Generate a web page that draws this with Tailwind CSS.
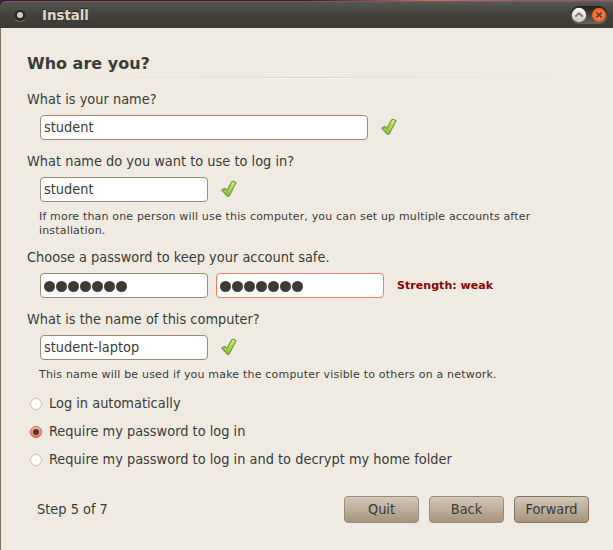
<!DOCTYPE html>
<html lang="en">
<head>
<meta charset="utf-8">
<title>Install</title>
<script src="https://cdn.jsdelivr.net/npm/@tailwindcss/browser@4"></script>
</head>
<body class="h-[550px] w-[613px] overflow-hidden bg-linear-to-r from-[#43173b] from-50% via-[#e5625f] via-70% to-[#97527f] to-85% font-['DejaVu_Sans_Condensed','DejaVu_Sans',sans-serif] text-[14.4px] leading-[20px] tracking-[0.01px] text-[#3c3b37] [font-stretch:condensed]">
<svg width="0" height="0" class="absolute" aria-hidden="true">
  <defs>
    <linearGradient id="green" x1="0" y1="0" x2="0" y2="1"><stop offset="0" stop-color="#e0ec7c"/><stop offset="1" stop-color="#8fbd2c"/></linearGradient>
    <symbol id="check" viewBox="0 0 18 18">
      <path d="M1.800 10 4.800 8.300 6.800 10.600 11.800 1.800 13.400 1.300 16 2.700 9.400 15.600 7.600 16.400Z" fill="url(#green)" stroke="#6f9b45" stroke-width="1.200" stroke-linejoin="round"/>
    </symbol>
  </defs>
</svg>
<div class="flex h-full flex-col pt-px">
  <header class="flex h-[27px] shrink-0 items-center rounded-tl-[6px] border-t border-[#65635c] bg-linear-to-b from-[#575650] via-[#403f3a] via-55% to-[#3b3a36] pr-[4px] pl-[14px]">
    <span class="mt-px flex size-[12px] items-center justify-center rounded-full border-b border-[#77756d] bg-[#2b2a27]"><span class="size-[6px] rounded-full bg-[#d3cec4]"></span></span>
    <h1 class="mt-[2px] ml-[16px] font-['DejaVu_Sans'] text-[13.33px] font-bold tracking-normal text-[#dfd8c8] [font-stretch:normal] [text-shadow:0_-1px_#252522]">Install</h1>
    <svg class="ml-auto" width="40" height="20" viewBox="0 0 40 20">
      <defs>
        <linearGradient id="well" x1="0" y1="0" x2="0" y2="1"><stop stop-color="#22211f"/><stop offset="1" stop-color="#65645e"/></linearGradient>
        <linearGradient id="white" x1="0" y1="0" x2="0" y2="1"><stop stop-color="#fff"/><stop offset="1" stop-color="#cfc9bd"/></linearGradient>
        <radialGradient id="orange"><stop stop-color="#ff9364"/><stop offset=".65" stop-color="#fa753f"/><stop offset="1" stop-color="#e84c18"/></radialGradient>
      </defs>
      <rect x="1" y="1" width="38" height="18" rx="9" fill="url(#well)"/>
      <circle cx="10" cy="10" r="7.200" fill="url(#white)"/>
      <path d="M6.300 11.500 10 8.200l3.700 3.300" fill="none" stroke="#75736e" stroke-width="1.800"/>
      <circle cx="30" cy="10" r="7.200" fill="url(#orange)"/>
      <path d="m27.300 7.500 5.400 5m0-5-5.400 5" stroke="#69402d" stroke-width="1.800"/>
    </svg>
  </header>
  <main class="flex grow flex-col border-l border-[#857460] bg-[#efebe3] pl-[26px]">
    <h2 class="mt-[26px] h-[23px] font-['DejaVu_Sans'] text-[16px] font-bold tracking-normal [font-stretch:normal]">Who are you?</h2>
    <div class="h-px w-[562px] bg-linear-to-r from-[#efebe3] via-[#ddd8c9] to-[#efebe3]"></div>
    <div class="h-px w-[562px] bg-linear-to-r from-[#efebe3] via-[#f6f3e9] to-[#efebe3]"></div>
    <label class="mt-[10px]">What is your name?</label>
    <div class="mt-[6px] ml-[13px] flex items-center">
      <div class="h-[25px] w-[328px] rounded-[4px] border border-[#9c8b72] bg-white pl-[3px] leading-[23px]">student</div>
      <svg class="mb-[2px] ml-[12px]" width="18" height="18"><use href="#check"/></svg>
    </div>
    <label class="mt-[11px]">What name do you want to use to log in?</label>
    <div class="mt-[6px] ml-[13px] flex items-center">
      <div class="h-[25px] w-[168px] rounded-[4px] border border-[#9c8b72] bg-white pl-[3px] leading-[23px]">student</div>
      <svg class="mb-[2px] ml-[12px]" width="18" height="18"><use href="#check"/></svg>
    </div>
    <p class="mt-[8px] ml-[12px] w-[510px] font-['DejaVu_Sans'] text-[11px] leading-[14px] tracking-[0.17px] [font-stretch:normal]">If more than one person will use this computer, you can set up multiple accounts after<br>installation.</p>
    <label class="mt-[9px]">Choose a password to keep your account safe.</label>
    <div class="mt-[6px] ml-[13px] flex items-center">
      <div class="flex h-[25px] w-[168px] items-center gap-px rounded-[4px] border border-[#9c8b72] bg-white pt-px pl-[3px]">
        <i class="size-[11px] rounded-full bg-[#3c3b37]"></i><i class="size-[11px] rounded-full bg-[#3c3b37]"></i><i class="size-[11px] rounded-full bg-[#3c3b37]"></i><i class="size-[11px] rounded-full bg-[#3c3b37]"></i><i class="size-[11px] rounded-full bg-[#3c3b37]"></i><i class="size-[11px] rounded-full bg-[#3c3b37]"></i><i class="size-[11px] rounded-full bg-[#3c3b37]"></i>
      </div>
      <div class="ml-[8px] flex h-[25px] w-[168px] items-center gap-px rounded-[4px] border border-[#f47a62] bg-white pt-px pl-[3px]">
        <i class="size-[11px] rounded-full bg-[#3c3b37]"></i><i class="size-[11px] rounded-full bg-[#3c3b37]"></i><i class="size-[11px] rounded-full bg-[#3c3b37]"></i><i class="size-[11px] rounded-full bg-[#3c3b37]"></i><i class="size-[11px] rounded-full bg-[#3c3b37]"></i><i class="size-[11px] rounded-full bg-[#3c3b37]"></i><i class="size-[11px] rounded-full bg-[#3c3b37]"></i>
      </div>
      <strong class="ml-[13px] font-['DejaVu_Sans'] text-[11px] tracking-[0.05px] text-[#8b0000] [font-stretch:normal]">Strength: weak</strong>
    </div>
    <label class="mt-[11px]">What is the name of this computer?</label>
    <div class="mt-[6px] ml-[13px] flex items-center">
      <div class="h-[25px] w-[168px] rounded-[4px] border border-[#9c8b72] bg-white pl-[3px] leading-[23px]">student-laptop</div>
      <svg class="mb-[2px] ml-[12px]" width="18" height="18"><use href="#check"/></svg>
    </div>
    <p class="mt-[8px] ml-[12px] font-['DejaVu_Sans'] text-[11px] leading-[14px] tracking-[0.19px] [font-stretch:normal]">This name will be used if you make the computer visible to others on a network.</p>
    <div class="mt-[11px] ml-[3px] flex flex-col gap-[8px]">
      <div class="flex items-center gap-[7px]"><span class="mt-px size-[12px] rounded-full border border-[#cabfb0] bg-white"></span>Log in automatically</div>
      <div class="flex items-center gap-[7px]"><span class="mt-px flex size-[12px] items-center justify-center rounded-full border border-[#e6543d] bg-linear-to-b from-[#ffc0ae] to-[#f9694e]"><span class="size-[6px] rounded-full bg-[#3c3b37]"></span></span>Require my password to log in</div>
      <div class="flex items-center gap-[7px]"><span class="mt-px size-[12px] rounded-full border border-[#cabfb0] bg-white"></span>Require my password to log in and to decrypt my home folder</div>
    </div>
    <footer class="mt-[27px] flex items-center pr-[24px] pl-[10px]">
      <span class="-mt-[2px]">Step 5 of 7</span>
      <div class="ml-auto flex gap-[10px]">
        <button class="h-[27px] w-[75px] rounded-[4px] border border-[#9a8b76] bg-linear-to-b from-[#d3c7b8] to-[#a6957c] pb-[2px]">Quit</button>
        <button class="h-[27px] w-[75px] rounded-[4px] border border-[#9a8b76] bg-linear-to-b from-[#d3c7b8] to-[#a6957c] pb-[2px]">Back</button>
        <button class="h-[27px] w-[75px] rounded-[4px] border border-[#857761] bg-linear-to-b from-[#d3c7b8] to-[#a6957c] pb-[2px]">Forward</button>
      </div>
    </footer>
  </main>
</div>
</body>
</html>
